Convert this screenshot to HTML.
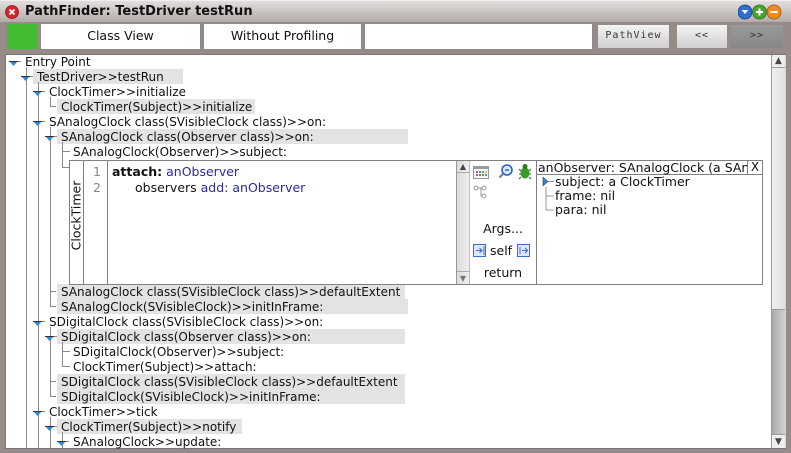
<!DOCTYPE html>
<html><head><meta charset="utf-8"><style>
*{margin:0;padding:0;box-sizing:border-box}
body{width:791px;height:453px;overflow:hidden;background:#978b89;font-family:"DejaVu Sans","Liberation Sans",sans-serif;font-size:12px;color:#111;position:relative}
.a{position:absolute}
.t{position:absolute;white-space:nowrap;line-height:15px;height:15px}
.tr .t{margin-top:1px}
.hl{position:absolute;background:#e3e3e3;height:15px}
.vl{position:absolute;width:1px;background:#8a8a8a}
.hz{position:absolute;height:1px;background:#8a8a8a}
.btn{position:absolute;background:#fff;border:1px solid #8a8a8a;text-align:center;line-height:24px;font-size:12.5px}
.gb{position:absolute;background:linear-gradient(#f4f4f4,#cfcfcf);text-align:center;font-family:"DejaVu Sans Mono",monospace;font-size:10px;line-height:22px;letter-spacing:1px;color:#333}
.kw{color:#2a2aa0}
</style></head><body>
<div class="a" style="left:0;top:0;width:791px;height:22px;background:linear-gradient(#e2dede,#b3aaa8);border-top:1px solid #f0eeee"></div>
<svg class="a" style="left:5px;top:5px" width="14" height="14"><circle cx="7" cy="7" r="6.5" fill="#d2262a" stroke="#8a1a1a" stroke-width=".8"/><path d="M4.5 4.5l5 5M9.5 4.5l-5 5" stroke="#fff" stroke-width="1.8"/></svg>
<div class="t" style="left:25px;top:4px;font-weight:bold;font-size:13px;color:#111">PathFinder: TestDriver testRun</div>
<svg class="a" style="left:738px;top:4px" width="50" height="16">
<circle cx="7" cy="8" r="7" fill="#2f6fd0" stroke="#1a3f80" stroke-width=".8"/><path d="M3.8 6h6.4L7 10.1z" fill="#fff"/>
<circle cx="21.5" cy="8" r="7" fill="#4aa52c" stroke="#2a6a18" stroke-width=".8"/><path d="M21.5 4.5v7M18 8h7" stroke="#fff" stroke-width="2"/>
<circle cx="36" cy="8" r="7" fill="#f08a1c" stroke="#9a5810" stroke-width=".8"/><path d="M32.5 8h7" stroke="#fff" stroke-width="2"/>
</svg>
<div class="a" style="left:7px;top:24px;width:30px;height:25px;background:#44bb33"></div>
<div class="btn" style="left:40px;top:23px;width:161px;height:27px">Class View</div>
<div class="btn" style="left:203px;top:23px;width:159px;height:27px">Without Profiling</div>
<div class="btn" style="left:364px;top:23px;width:229px;height:27px"></div>
<div class="gb" style="left:598px;top:25px;width:71px;height:23px">PathView</div>
<div class="gb" style="left:677px;top:25px;width:50px;height:23px">&lt;&lt;</div>
<div class="gb" style="left:731px;top:25px;width:52px;height:23px;background:linear-gradient(#9a9a9a,#878787)">&gt;&gt;</div>
<div class="a" style="left:5px;top:54px;width:781px;height:395px;background:#fff;border:1px solid #777"></div>
<div class="a" style="left:771px;top:55px;width:15px;height:393px;background:linear-gradient(90deg,#aaa,#d4d4d4);border-left:1px solid #999"></div>
<div class="a" style="left:772px;top:68px;width:13px;height:242px;background:linear-gradient(90deg,#eee,#e2e2e2);border-bottom:1px solid #999"></div>
<div class="a" style="left:772px;top:55px;width:13px;height:13px;background:#eee;border-bottom:1px solid #999;font-size:9px;text-align:center;line-height:13px;color:#444">▲</div>
<div class="a" style="left:772px;top:434px;width:13px;height:14px;background:#eee;border-top:1px solid #999;font-size:9px;text-align:center;line-height:14px;color:#444">▼</div>

<div class="hl" style="left:33px;top:69px;width:150px"></div>
<div class="hl" style="left:57px;top:99px;width:198px"></div>
<div class="hl" style="left:57px;top:129px;width:351px"></div>
<div class="hl" style="left:57px;top:284px;width:348px"></div>
<div class="hl" style="left:57px;top:299px;width:351px"></div>
<div class="hl" style="left:57px;top:329px;width:348px"></div>
<div class="hl" style="left:57px;top:374px;width:348px"></div>
<div class="hl" style="left:57px;top:389px;width:348px"></div>
<div class="hl" style="left:57px;top:419px;width:185px"></div>

<div class="vl" style="left:26px;top:67px;height:381px"></div>
<div class="vl" style="left:38px;top:82px;height:366px"></div>
<div class="vl" style="left:50px;top:97px;height:9px"></div>
<div class="hz" style="left:50px;top:106px;width:6px"></div>
<div class="vl" style="left:50px;top:127px;height:179px"></div>
<div class="vl" style="left:62px;top:142px;height:26px"></div>
<div class="hz" style="left:62px;top:151px;width:8px"></div>
<div class="hz" style="left:62px;top:167px;width:7px"></div>
<div class="hz" style="left:50px;top:291px;width:6px"></div>
<div class="hz" style="left:50px;top:306px;width:6px"></div>
<div class="vl" style="left:50px;top:327px;height:69px"></div>
<div class="vl" style="left:62px;top:342px;height:24px"></div>
<div class="hz" style="left:62px;top:351px;width:8px"></div>
<div class="hz" style="left:62px;top:366px;width:8px"></div>
<div class="hz" style="left:50px;top:381px;width:6px"></div>
<div class="hz" style="left:50px;top:396px;width:6px"></div>
<div class="vl" style="left:50px;top:417px;height:31px"></div>
<div class="vl" style="left:62px;top:432px;height:16px"></div>

<svg class="a" style="left:0;top:0;pointer-events:none" width="791" height="453">
<defs><g id="tr"><path d="M0 0.5h9" stroke="#333" stroke-width="1"/><path d="M1 1h7l-3.5 4z" fill="#2a88e0"/><path d="M9 0.5h3" stroke="#888"/></g></defs>
<use href="#tr" x="9" y="61"/>
<use href="#tr" x="21" y="76"/>
<use href="#tr" x="33" y="91"/>
<use href="#tr" x="33" y="121"/>
<use href="#tr" x="45" y="136"/>
<use href="#tr" x="33" y="321"/>
<use href="#tr" x="45" y="336"/>
<use href="#tr" x="33" y="411"/>
<use href="#tr" x="45" y="426"/>
<use href="#tr" x="57" y="441"/>
</svg>

<div class="tr">
<div class="t" style="left:25px;top:54px">Entry Point</div>
<div class="t" style="left:37px;top:69px">TestDriver&gt;&gt;testRun</div>
<div class="t" style="left:49px;top:84px">ClockTimer&gt;&gt;initialize</div>
<div class="t" style="left:61px;top:99px">ClockTimer(Subject)&gt;&gt;initialize</div>
<div class="t" style="left:49px;top:114px">SAnalogClock class(SVisibleClock class)&gt;&gt;on:</div>
<div class="t" style="left:61px;top:129px">SAnalogClock class(Observer class)&gt;&gt;on:</div>
<div class="t" style="left:73px;top:144px">SAnalogClock(Observer)&gt;&gt;subject:</div>
<div class="t" style="left:61px;top:284px">SAnalogClock class(SVisibleClock class)&gt;&gt;defaultExtent</div>
<div class="t" style="left:61px;top:299px">SAnalogClock(SVisibleClock)&gt;&gt;initInFrame:</div>
<div class="t" style="left:49px;top:314px">SDigitalClock class(SVisibleClock class)&gt;&gt;on:</div>
<div class="t" style="left:61px;top:329px">SDigitalClock class(Observer class)&gt;&gt;on:</div>
<div class="t" style="left:73px;top:344px">SDigitalClock(Observer)&gt;&gt;subject:</div>
<div class="t" style="left:73px;top:359px">ClockTimer(Subject)&gt;&gt;attach:</div>
<div class="t" style="left:61px;top:374px">SDigitalClock class(SVisibleClock class)&gt;&gt;defaultExtent</div>
<div class="t" style="left:61px;top:389px">SDigitalClock(SVisibleClock)&gt;&gt;initInFrame:</div>
<div class="t" style="left:49px;top:404px">ClockTimer&gt;&gt;tick</div>
<div class="t" style="left:61px;top:419px">ClockTimer(Subject)&gt;&gt;notify</div>
<div class="t" style="left:73px;top:434px">SAnalogClock&gt;&gt;update:</div>
</div>

<div class="a" style="left:69px;top:160px;width:694px;height:125px;background:#fff;border:1px solid #808080"></div>
<div class="vl" style="left:83px;top:161px;height:123px;background:#808080"></div>
<div class="vl" style="left:107px;top:161px;height:123px;background:#808080"></div>
<div class="a" style="left:70px;top:161px;width:13px;height:123px">
<div class="t" style="left:-30px;top:47px;width:72px;text-align:center;transform:rotate(-90deg);font-size:12.5px">ClockTimer</div></div>
<div class="t" style="left:93px;top:164px;color:#888;font-size:12.5px">1</div>
<div class="t" style="left:93px;top:180px;color:#888;font-size:12.5px">2</div>
<div class="t" style="left:112px;top:164px;font-size:12.5px"><b>attach:</b> <span class="kw">anObserver</span></div>
<div class="t" style="left:135px;top:180px;font-size:12.5px">observers <span class="kw">add:</span> <span class="kw">anObserver</span></div>
<div class="a" style="left:456px;top:161px;width:14px;height:123px;background:linear-gradient(90deg,#ddd,#eee);border-left:1px solid #999;border-right:1px solid #bbb"></div>
<div class="a" style="left:457px;top:161px;width:12px;height:12px;font-size:8px;text-align:center;line-height:12px;color:#444;border-bottom:1px solid #aaa">▲</div>
<div class="a" style="left:457px;top:271px;width:12px;height:13px;font-size:8px;text-align:center;line-height:13px;color:#777;border-top:1px solid #aaa">▼</div>
<svg class="a" style="left:470px;top:161px" width="66" height="123">
<rect x="3.5" y="5.5" width="15" height="12" fill="#f4f4f4" stroke="#999"/><rect x="4" y="6" width="14" height="2" fill="#99a"/>
<g fill="#c55"><rect x="6" y="10" width="2" height="2"/><rect x="12" y="13" width="2" height="2" fill="#5a5"/><rect x="9" y="10" width="2" height="2" fill="#58c"/><rect x="15" y="10" width="2" height="2" fill="#cc5"/><rect x="6" y="13" width="2" height="2" fill="#a5c"/><rect x="9" y="13" width="2" height="2"/><rect x="15" y="13" width="2" height="2" fill="#58c"/><rect x="12" y="10" width="2" height="2" fill="#5a5"/></g>
<circle cx="37" cy="9" r="5" fill="#dfe9ff" stroke="#2a5fd0" stroke-width="1.6"/><path d="M35 9h4" stroke="#2a5fd0" stroke-width="1.4"/><path d="M33.5 12.5l-4 4" stroke="#777" stroke-width="2"/>
<ellipse cx="55" cy="12" rx="4.5" ry="5.5" fill="#3a9a2a"/><circle cx="55" cy="5.5" r="2.5" fill="#2a7a20"/><path d="M49 8l2 2M61 8l-2 2M49 13h2M59 13h2M49 18l2-2M61 18l-2-2" stroke="#2a6a20"/>
<circle cx="6" cy="27" r="2" fill="none" stroke="#999"/><circle cx="14" cy="27" r="2" fill="none" stroke="#999"/><circle cx="14" cy="35" r="2" fill="none" stroke="#999"/><path d="M8 27h4M11 27v8h1" stroke="#999" fill="none"/>
<rect x="3.5" y="83.5" width="12" height="12" fill="#dde8ff" stroke="#3a6ad0"/><path d="M6 89.5h6M9.5 87l2.5 2.5-2.5 2.5M14 85v9" stroke="#3a6ad0" fill="none"/>
<rect x="47.5" y="83.5" width="12" height="12" fill="#dde8ff" stroke="#3a6ad0"/><path d="M50 86v7M52 89.5h5M55 87l2.5 2.5-2.5 2.5" stroke="#3a6ad0" fill="none"/>
</svg>
<div class="t" style="left:470px;top:221px;width:66px;text-align:center;font-size:12.5px">Args...</div>
<div class="t" style="left:490px;top:243px;font-size:12.5px">self</div>
<div class="t" style="left:470px;top:265px;width:66px;text-align:center;font-size:12.5px">return</div>
<div class="vl" style="left:536px;top:161px;height:123px;background:#808080"></div>
<div class="hz" style="left:537px;top:174px;width:225px;background:#808080"></div>
<div class="t" style="left:538px;top:160px;width:209px;overflow:hidden;font-size:12.5px">anObserver: SAnalogClock (a SAnalogClock)</div>
<div class="a" style="left:747px;top:161px;width:15px;height:13px;border-left:1px solid #808080;font-size:12px;line-height:13px;text-align:center">X</div>
<svg class="a" style="left:540px;top:175px" width="20" height="45"><path d="M3 2l5 4.5-5 4.5z" fill="#2a88e0" stroke="#222" stroke-width=".5"/><path d="M8 6.5h6M6 12v23M6 21h8M6 35h8" stroke="#999" fill="none"/></svg>
<div class="t" style="left:555px;top:174px;font-size:12.5px">subject: a ClockTimer</div>
<div class="t" style="left:555px;top:188px;font-size:12.5px">frame: nil</div>
<div class="t" style="left:555px;top:202px;font-size:12.5px">para: nil</div>
</body></html>
